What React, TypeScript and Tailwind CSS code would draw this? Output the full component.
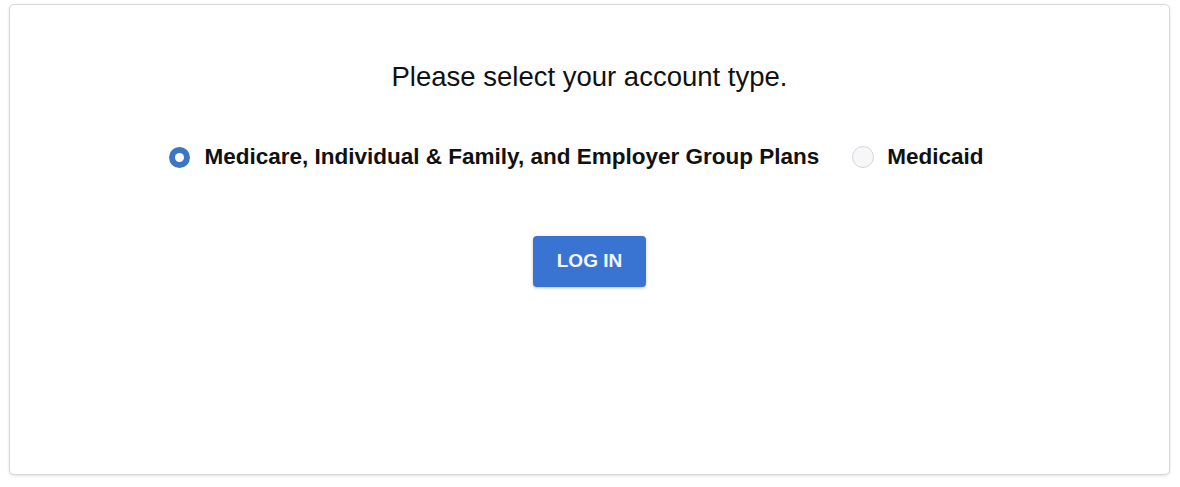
import { useState } from "react";

type Plan = "commercial" | "medicaid";

function Radio({ checked }: { checked: boolean }) {
  return checked ? (
    <span className="flex h-[21px] w-[21px] shrink-0 items-center justify-center rounded-full bg-[#3a76c4]">
      <span className="h-[9px] w-[9px] rounded-full bg-white" />
    </span>
  ) : (
    <span className="h-[22px] w-[22px] shrink-0 rounded-full border border-[#d6d6d6] bg-[#f7f7f9]" />
  );
}

export default function App() {
  const [plan, setPlan] = useState<Plan>("commercial");

  return (
    <div className="h-[487px] w-[1180px] bg-white pl-[9px] pr-[10px] pt-[4px] font-['Liberation_Sans',Arial,sans-serif] text-black">
      <div className="flex h-[471px] flex-col items-center rounded-[5px] border border-[#d9d9d9] bg-white shadow-[0_1px_3px_rgba(0,0,0,0.12)]">
        <h1 className="mt-[56px] text-[27.5px] leading-[32px] text-[#111]">Please select your account type.</h1>

        <div className="mt-[50px] flex items-center pr-[26px]">
          <button onClick={() => setPlan("commercial")} className="flex items-center">
            <Radio checked={plan === "commercial"} />
            <span className="ml-[14px] text-[22.5px] font-bold leading-[28px] text-[#111]">
              Medicare, Individual &amp; Family, and Employer Group Plans
            </span>
          </button>
          <button onClick={() => setPlan("medicaid")} className="ml-[33px] flex items-center">
            <Radio checked={plan === "medicaid"} />
            <span className="ml-[13px] text-[22.5px] font-bold leading-[28px] text-[#111]">Medicaid</span>
          </button>
        </div>

        <button className="mt-[65px] h-[51px] w-[113px] rounded-[4px] bg-[#3a74d3] text-[19px] font-bold text-[#f4f8ff] shadow-[0_1px_3px_rgba(0,0,0,0.25)]">
          LOG IN
        </button>
      </div>
    </div>
  );
}
